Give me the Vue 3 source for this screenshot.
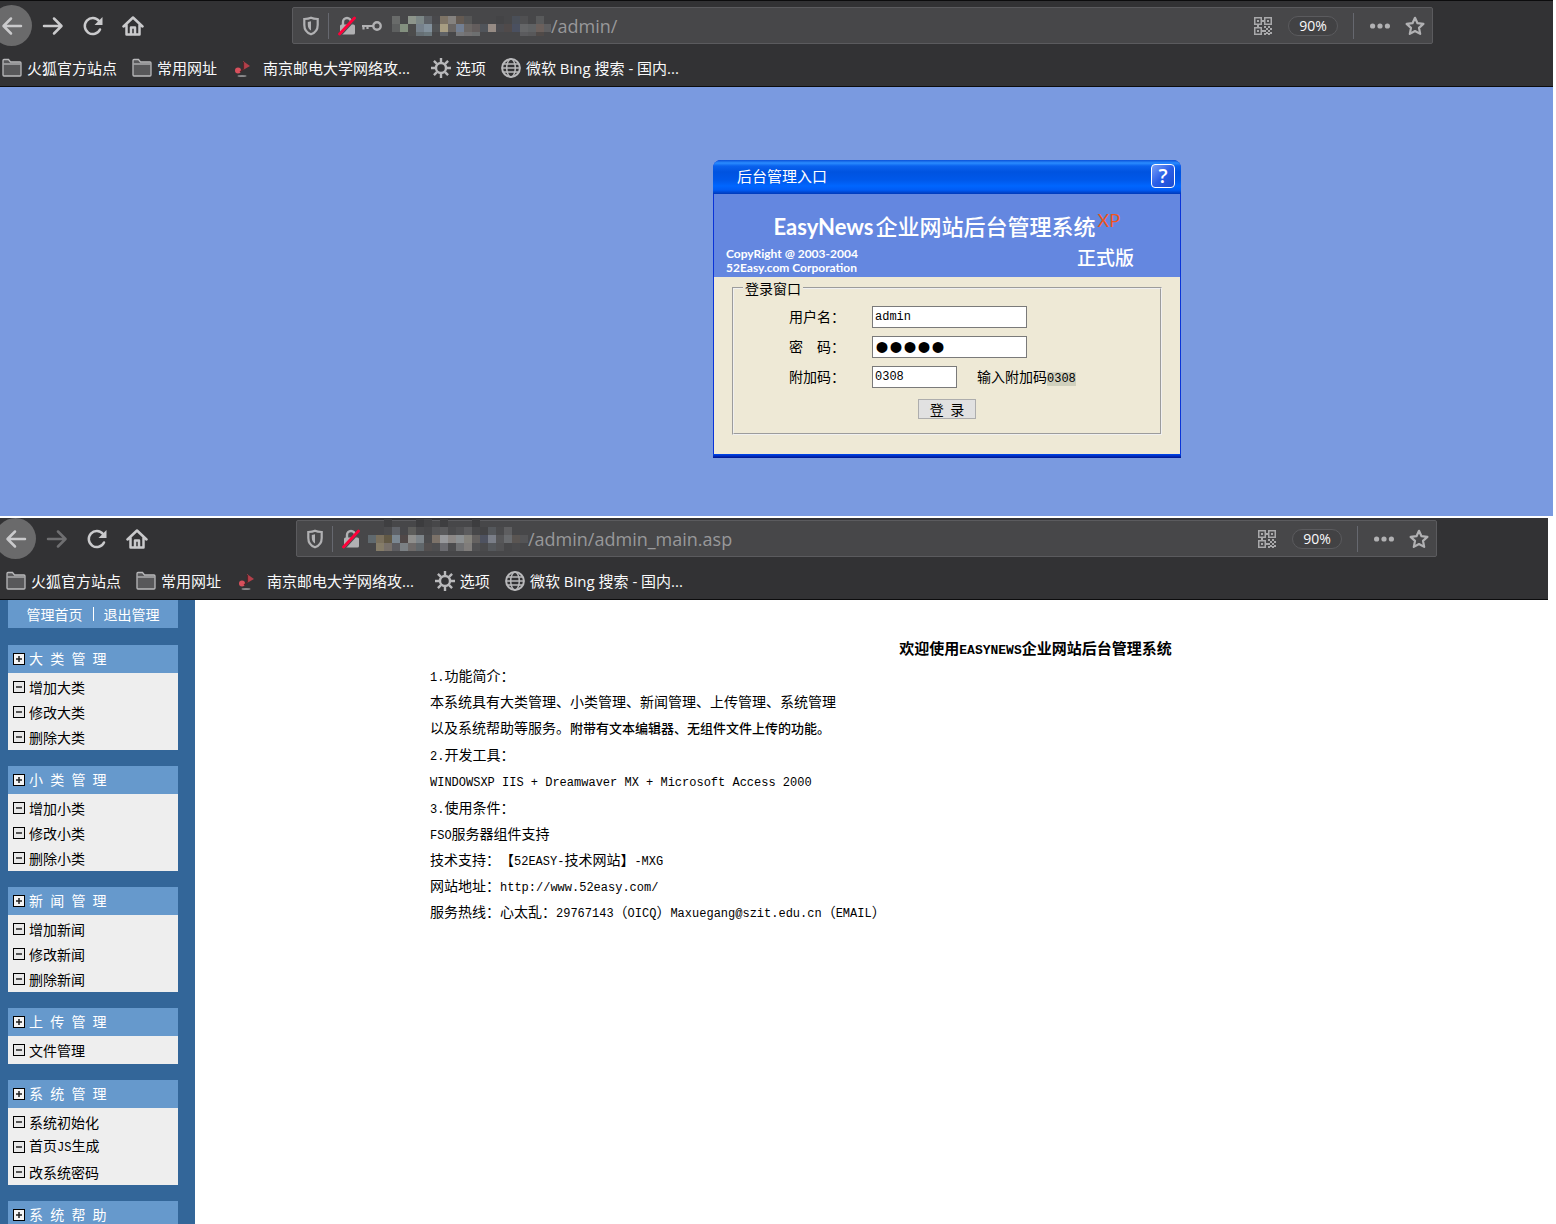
<script setup>
import { ref } from 'vue'

const browsers = [
  {
    id: 'login',
    path: '/admin/',
    canGoForward: true,
    savedLogin: true,
    mask: {
      width: 159,
      height: 20,
      rows: [
        '696b6a - 8d958b 7c8787 5d6166 49494c 7e7466 85827f 645a52 565656 - - - 444446 474749 4a4f58 505052 - 595a5b -',
        '5e6060 83907f 4c4c4c 76818b 82909b 505254 a79d82 6a6664 737f92 6b6765 635d5d 50545a 968b84 4c4c50 504a4a 4a5060 656668 606264 6b605c 5e5e60',
        '- - 4c4c4c 666f74 6b777c - 5e6166 - 76777a 737172 6d6f70 - - - - - 5b5b5e 58585a 504a48 -',
      ],
    },
  },
  {
    id: 'admin',
    path: '/admin/admin_main.asp',
    canGoForward: false,
    savedLogin: false,
    mask: {
      width: 160,
      height: 32,
      rows: [
        '- - 3f3f41 - - - 3c3c3e 434345 - 3e3e40 - - - 3d3d3f - - - - - -',
        '- - 4b4b4d 5f6268 47474a 5d5d5b 4a4a4c - 555557 5a5a5c 4a4a4c 505052 5c5c5e - 434345 55585c 4a4a4c 5e5e60 - -',
        '60696e 7a705d 625945 7b8791 504848 8f8f8d 7d8489 4b4b4d 7c7269 98999c 8c8886 8c9092 85837d 646160 4e5260 7a7e88 565658 696b6e 5a5552 545456',
        '- 857c68 77706a 5c5c60 7b8084 6e6a69 60666a 534f4f 4e4e50 6b6b70 4c4c4e 6f7072 807d7b 505052 4a4a4c 55585c 525254 - 4a4a4c -',
      ],
    },
  },
]

const bookmarks = [
  { icon: 'folder', label: '火狐官方站点' },
  { icon: 'folder', label: '常用网址' },
  { icon: 'flag', label: '南京邮电大学网络攻...' },
  { icon: 'gear', label: '选项' },
  { icon: 'globe', label: '微软 Bing 搜索 - 国内...' },
]

const groups = [
  { title: '大 类 管 理', items: ['增加大类', '修改大类', '删除大类'] },
  { title: '小 类 管 理', items: ['增加小类', '修改小类', '删除小类'] },
  { title: '新 闻 管 理', items: ['增加新闻', '修改新闻', '删除新闻'] },
  { title: '上 传 管 理', items: ['文件管理'] },
  { title: '系 统 管 理', items: ['系统初始化', '首页JS生成', '改系统密码'] },
  { title: '系 统 帮 助', items: [] },
]

const sections = [
  [
    { text: '1.功能简介：' },
    { text: '本系统具有大类管理、小类管理、新闻管理、上传管理、系统管理' },
    { text: '以及系统帮助等服务。', extra: '附带有文本编辑器、无组件文件上传的功能。' },
  ],
  [
    { text: '2.开发工具：' },
    { text: 'WINDOWSXP IIS + Dreamwaver MX + Microsoft Access 2000' },
  ],
  [
    { text: '3.使用条件：' },
    { text: 'FSO服务器组件支持' },
    { text: '技术支持：【52EASY-技术网站】-MXG' },
    { text: '网站地址：http://www.52easy.com/' },
    { text: '服务热线：心太乱：29767143（OICQ）Maxuegang@szit.edu.cn（EMAIL）' },
  ],
]

const username = ref('admin')
const password = ref('admin')
const code = ref('0308')

// Splits text into half-width and full-width runs, which are set in different faces.
function runs(text) {
  return text.match(/[\x20-\x7e]+|[^\x20-\x7e]+/g).map((t) => ({ t, latin: /^[\x20-\x7e]/.test(t) }))
}

function cells(rows) {
  return rows.flatMap((row, y) =>
    row.split(' ').map((c, x) => ({ x: x * 8, y: y * 8, c })).filter((cell) => cell.c !== '-')
  ).map((cell) => ({ ...cell, c: '#' + cell.c }))
}
</script>

<template>
  <div class="screen">
    <section v-for="b in browsers" :key="b.id" :class="['window', b.id]">
      <header class="chrome">
        <div class="nav">
          <button class="tool back" aria-label="后退">
            <svg width="22" height="22" viewBox="0 0 22 22" class="line"><path d="M20 11H3M10 3.5 2.5 11l7.500 7.500" /></svg>
          </button>
          <button class="tool" :disabled="!b.canGoForward" aria-label="前进">
            <svg width="22" height="22" viewBox="0 0 22 22" class="line"><path d="M2 11h17M12 3.500 19.500 11 12 18.500" /></svg>
          </button>
          <button class="tool" aria-label="刷新">
            <svg width="22" height="22" viewBox="0 0 22 22" class="line"><path d="M18 14.500A8 8 0 1 1 17 6" /><path d="M20.500 2v8h-8z" class="solid" /></svg>
          </button>
          <button class="tool" aria-label="主页">
            <svg width="22" height="22" viewBox="0 0 22 22" class="line"><path d="M1.500 11.500 11 2.500l9.500 9M4.500 10v9.500h13V10" /><path d="M9 19v-6.500h4V19" /></svg>
          </button>
          <div class="address">
            <svg class="shield" width="18" height="20" viewBox="0 0 18 20"><path d="M9 1.800c2 1 4.500 1.200 6.700 1.200v6c0 4.500-2.200 7.700-6.700 9.300C4.500 16.700 2.300 13.500 2.300 9V3C4.500 3 7 2.800 9 1.800z" fill="none" stroke="#b1b1b3" stroke-width="2.200" /><path d="M9 5.300v9.200c-2-1.100-3.200-2.900-3.200-5.500V6z" fill="#b1b1b3" /></svg>
            <span class="rule"></span>
            <svg class="lock" width="18" height="20" viewBox="0 0 18 20"><path d="M5 9V6a4 4 0 0 1 8 0v3" fill="none" stroke="#b1b1b3" stroke-width="2.400" /><rect x="2" y="8.500" width="15" height="10" rx="1.500" fill="#b1b1b3" /><path d="M2.500 19.500 18 3" stroke="#4a4a4d" stroke-width="1.500" /><path d="M1.500 18 16.500 2" stroke="#ff0039" stroke-width="2.800" stroke-linecap="round" /></svg>
            <svg v-if="b.savedLogin" class="key" width="20" height="12" viewBox="0 0 20 12"><circle cx="15" cy="6" r="3.700" fill="none" stroke="#b1b1b3" stroke-width="2.400" /><path d="M11 6H0M1.500 6v3.500M5.500 6v3" fill="none" stroke="#b1b1b3" stroke-width="2.200" /></svg>
            <svg class="mask" :width="b.mask.width" :height="b.mask.height" shape-rendering="crispEdges" aria-hidden="true">
              <rect v-for="c in cells(b.mask.rows)" :key="c.x + '-' + c.y" :x="c.x" :y="c.y" width="8" height="8" :fill="c.c" />
            </svg>
            <input class="url" type="text" :value="b.path" aria-label="地址" />
            <svg width="18" height="18" viewBox="0 0 18 18" fill="#a9a9ab">
              <path fill-rule="evenodd" d="M0 0h8v8H0zM1.500 1.500v5h5v-5zM10 0h8v8h-8zM11.500 1.500v5h5v-5zM0 10h8v8H0zM1.500 11.500v5h5v-5z" />
              <path d="M3 3h2v2H3zM13 3h2v2h-2zM3 13h2v2H3zM8 3h2v2H8zM3 8h2v2H3zM8 13h2v2H8zM10 9h2v2h-2zM14 9h2v2h-2zM12 11h2v2h-2zM16 11h2v2h-2zM10 13h2v2h-2zM14 13h2v2h-2zM12 15h2v2h-2zM16 15h2v2h-2zM10 16h2v2h-2zM14 16h2v2h-2z" />
            </svg>
            <button class="zoom">90%</button>
            <span class="rule"></span>
            <svg class="dots" width="20" height="6" viewBox="0 0 20 6" fill="#b1b1b3"><circle cx="2.600" cy="3" r="2.600" /><circle cx="10" cy="3" r="2.600" /><circle cx="17.400" cy="3" r="2.600" /></svg>
            <svg width="20" height="20" viewBox="0 0 20 20"><path d="m10 1.800 2.500 5.400 5.900.7-4.400 4 1.200 6L10 15l-5.200 2.900 1.200-6-4.400-4 5.900-.7z" fill="none" stroke="#b1b1b3" stroke-width="2.200" stroke-linejoin="round" /></svg>
          </div>
        </div>
        <nav class="bookmarks">
          <a v-for="m in bookmarks" :key="m.label" href="#" :class="m.icon">
            <svg v-if="m.icon === 'folder'" width="20" height="20" viewBox="0 0 20 20"><path d="M1 17V2.500Q1 1.500 2 1.500h4.500L8.500 4H18q1 0 1 1v12q0 1-1 1H2q-1 0-1-1z" fill="#58585a" stroke="#b9b9bb" stroke-width="1.300" /><path d="M1.500 6h17" stroke="#b9b9bb" stroke-width="1.300" /></svg>
            <svg v-else-if="m.icon === 'flag'" width="26" height="20" viewBox="0 0 26 20"><path d="M11 3 18 8l-7 4z" fill="#b3404a" /><circle cx="6" cy="12.500" r="3" fill="#d8505c" /><path d="M8 14 11.500 11V4" stroke="#5a2328" stroke-width="1.200" fill="none" /><ellipse cx="10" cy="18" rx="4.500" ry="1" fill="#8a8a8c" /></svg>
            <svg v-else-if="m.icon === 'gear'" width="20" height="20" viewBox="0 0 20 20" fill="none" stroke="#b9b9bb"><circle cx="10" cy="10" r="5" stroke-width="2.400" /><path d="M10 0v4M10 16v4M0 10h4M16 10h4M2.900 2.900l3 3M14.100 14.100l3 3M2.900 17.100l3-3M14.100 5.900l3-3" stroke-width="2.400" /></svg>
            <svg v-else width="20" height="20" viewBox="0 0 20 20" fill="none" stroke="#b9b9bb"><circle cx="10" cy="10" r="8.900" stroke-width="2" /><ellipse cx="10" cy="10" rx="4.300" ry="8.900" stroke-width="1.500" /><path d="M2.500 6h15M1 10h18M2.500 14h15" stroke-width="1.300" /></svg>
            <span>{{ m.label }}</span>
          </a>
        </nav>
      </header>

      <main v-if="b.id === 'login'" class="desktop">
        <form class="dialog" @submit.prevent>
          <div class="titlebar">
            <span>后台管理入口</span>
            <button type="button" class="help" aria-label="帮助">?</button>
          </div>
          <div class="banner">
            <h1>EasyNews<span>企业网站后台管理系统</span><sup>XP</sup></h1>
            <div class="credits">
              <p>CopyRight @ 2003-2004<br />52Easy.com Corporation</p>
              <strong>正式版</strong>
            </div>
          </div>
          <div class="panel">
            <fieldset>
              <legend>登录窗口</legend>
              <div class="fields">
                <label for="user">用户名：</label>
                <input id="user" v-model="username" type="text" />
                <label for="pass">密　码：</label>
                <input id="pass" v-model="password" type="password" />
                <label for="code">附加码：</label>
                <div class="code">
                  <input id="code" v-model="code" type="text" />
                  <span>输入附加码<mark class="latin">0308</mark></span>
                </div>
              </div>
              <button class="submit" type="submit">登&nbsp; 录</button>
            </fieldset>
          </div>
        </form>
      </main>

      <div v-else class="console">
        <aside>
          <div class="top"><a href="#">管理首页</a><i></i><a href="#">退出管理</a></div>
          <section v-for="g in groups" :key="g.title" class="group">
            <h2>
              <svg width="12" height="12" viewBox="0 0 12 12"><rect x=".5" y=".5" width="11" height="11" fill="#f4f4f4" stroke="#000" /><path d="M3 6h6M6 3v6" stroke="#222" stroke-width="1.500" /></svg>
              <span><span v-for="(r, i) in runs(g.title)" :key="i" :class="{ latin: r.latin }">{{ r.t }}</span></span>
            </h2>
            <ul>
              <li v-for="item in g.items" :key="item">
                <svg width="12" height="12" viewBox="0 0 12 12"><rect x=".5" y=".5" width="11" height="11" fill="#e8e8e8" stroke="#000" /><path d="M3 6h6" stroke="#222" stroke-width="1.500" /></svg>
                <a href="#"><span v-for="(r, i) in runs(item)" :key="i" :class="{ latin: r.latin }">{{ r.t }}</span></a>
              </li>
            </ul>
          </section>
        </aside>
        <main class="content">
          <article>
            <h1>欢迎使用<span class="latin">EASYNEWS</span>企业网站后台管理系统</h1>
            <section v-for="(s, n) in sections" :key="n">
              <p v-for="line in s" :key="line.text"><span v-for="(r, i) in runs(line.text)" :key="i" :class="{ latin: r.latin }">{{ r.t }}</span><span v-if="line.extra" class="extra">{{ line.extra }}</span></p>
            </section>
          </article>
        </main>
      </div>
    </section>
  </div>
</template>

<style>
body {
  margin: 0;
  background: #fff;
}
</style>

<style scoped>
* {
  box-sizing: border-box;
}

.screen {
  display: flex;
  flex-direction: column;
  height: 100vh;
  overflow: hidden;
  font-family: "Noto Sans CJK SC", sans-serif;
  font-size: 14px;
  color: #000;
  text-spacing-trim: space-all;
}

h1, h2, p, ul {
  margin: 0;
  padding: 0;
  font-size: inherit;
  font-weight: inherit;
}

svg {
  display: block;
  flex: none;
}

a {
  color: inherit;
  text-decoration: none;
}

button, input {
  font: inherit;
  color: inherit;
  padding: 0;
  margin: 0;
}

.latin {
  font-family: "Liberation Mono", monospace;
  font-size: 12px;
  white-space: pre;
}

.login {
  margin-right: 3px;
}

.admin {
  display: flex;
  flex-direction: column;
  flex: 1;
  min-height: 0;
  margin-top: 2px;
}

/* Browser chrome */
.chrome {
  background: #323234;
  border-bottom: 1px solid #0c0c0d;
  color: #f9f9fa;
}

.login .chrome {
  border-top: 1px solid #0c0c0d;
  padding: 4px 120px 5px 0;
}

.admin .chrome {
  margin-right: 8px;
  padding: 0 111px 5px 4px;
}

.nav {
  display: flex;
  align-items: center;
  height: 41px;
}

.tool {
  display: flex;
  align-items: center;
  justify-content: center;
  width: 40px;
  height: 40px;
  border: 0;
  background: none;
}

.tool:disabled {
  opacity: 0.4;
}

.back {
  width: 41px;
  height: 41px;
  margin: 0 1px 0 -9px;
  border-radius: 50%;
  background: #6a6a6b;
}

.line {
  fill: none;
  stroke: #cacacc;
  stroke-width: 2.5px;
  stroke-linecap: round;
  stroke-linejoin: round;
}

.line .solid {
  fill: #cacacc;
  stroke: none;
}

.address {
  display: flex;
  align-items: center;
  flex: 1;
  height: 37px;
  margin-left: 139px;
  padding: 0 7px 0 9px;
  border: 1px solid #5b5b5e;
  border-radius: 2px;
  background: #474749;
}

.rule {
  width: 1px;
  height: 26px;
  background: #66686f;
}

.shield {
  margin-right: 8px;
}

.lock {
  margin: 0 6px 0 9px;
}

.key {
  margin-right: 10px;
}

.admin .lock {
  margin-right: 8px;
}

.admin .mask {
  margin-bottom: 8px;
}

.url {
  flex: 1;
  min-width: 0;
  height: 28px;
  border: 0;
  outline: 0;
  background: none;
  color: #98989a;
  font-family: "Open Sans", sans-serif;
  font-size: 18px;
}

.zoom {
  width: 50px;
  height: 20px;
  margin: 0 15px 0 16px;
  border: 1px solid #5b5b5e;
  border-radius: 10px;
  background: #424244;
  color: #f9f9fa;
  font-family: "Open Sans", sans-serif;
  font-size: 14px;
  line-height: 18px;
}

.dots {
  margin: 0 15px 0 16px;
}

.bookmarks {
  display: flex;
  align-items: center;
  gap: 15px;
  height: 35px;
  padding: 9px 0 0 2px;
  font-family: "Open Sans", "Noto Sans CJK SC", sans-serif;
  font-size: 15px;
  line-height: 20px;
  white-space: nowrap;
}

.bookmarks a {
  display: flex;
  align-items: center;
  gap: 5px;
}

.bookmarks .flag {
  padding-right: 6px;
}

/* Sign-in page */
.desktop {
  display: flex;
  justify-content: flex-end;
  padding: 73px 372px 58px 0;
  background: #7a9ae0;
}

.dialog {
  width: 468px;
  padding-bottom: 4px;
  border-radius: 8px 8px 0 0;
  background: linear-gradient(#0a34d8 calc(100% - 4px), #0048f0 calc(100% - 4px), #00138c);
}

.titlebar {
  display: flex;
  align-items: center;
  justify-content: space-between;
  height: 34px;
  padding: 0 6px 2px 24px;
  border-radius: 8px 8px 0 0;
  background: linear-gradient(#0a50d8 0, #2a8cff 3px, #0a62ee 6px, #0053e0 12px, #0058ea 20px, #0066ff 26px, #005cf5 30px, #0038b8 34px);
  color: #fff;
  font-size: 15px;
  line-height: 20px;
}

.help {
  width: 24px;
  height: 24px;
  border: 1px solid #fff;
  border-radius: 4px;
  background: linear-gradient(135deg, #7aa0f8, #2a5ee8 50%, #1c4cd0);
  color: #fff;
  font-family: "Open Sans", sans-serif;
  font-size: 20px;
  font-weight: 600;
  line-height: 20px;
}

.banner {
  height: 83px;
  margin: 0 1px;
  padding: 13px 46px 0 12px;
  background: #6487e0;
  color: #fff;
}

.banner h1 {
  display: flex;
  align-items: center;
  justify-content: flex-end;
  gap: 2px;
  height: 40px;
  margin-right: 14px;
  font-family: Lato, "Noto Sans CJK SC", sans-serif;
  font-size: 22px;
  font-weight: 700;
  line-height: 40px;
}

.banner h1 span {
  font-weight: 500;
}

.banner sup {
  align-self: flex-start;
  color: #f0561e;
  font-size: 18px;
  font-weight: 400;
  line-height: 26px;
}

.credits {
  display: flex;
  justify-content: space-between;
  font-family: Lato, "Noto Sans CJK SC", sans-serif;
  font-size: 12px;
  font-weight: 700;
  line-height: 14px;
}

.credits strong {
  font-size: 19px;
  font-weight: 500;
  line-height: 22px;
}

.panel {
  margin: 0 1px;
  padding: 3px 18px 19px;
  background: #eee9d6;
}

fieldset {
  margin: 0;
  padding: 10px 0 14px;
  border: 2px groove #f0f0f0;
}

legend {
  height: 16px;
  margin-left: 9px;
  padding: 0 2px;
  line-height: 16px;
}

.fields {
  display: grid;
  grid-template-columns: 83px 1fr;
  grid-auto-rows: 22px;
  gap: 8px 0;
  padding-left: 55px;
  line-height: 20px;
}

.fields input {
  display: block;
  width: 155px;
  height: 22px;
  padding: 0 2px;
  border: 1px solid #7a7a7a;
  outline: 0;
  background: #fff;
  font-family: "Liberation Mono", monospace;
  font-size: 12px;
  line-height: 20px;
}

.fields input[type="password"] {
  font-family: "Liberation Sans", sans-serif;
  font-size: 40px;
}

.code {
  display: flex;
  gap: 20px;
}

.fields .code input {
  width: 85px;
}

mark {
  background: #d0d0bd;
  color: inherit;
}

.submit {
  display: block;
  width: 58px;
  height: 20px;
  margin: 11px auto 0 184px;
  border: 1px solid #adadad;
  background: #e1e1e1;
  line-height: 16px;
}

/* Admin console */
.console {
  display: flex;
  flex: 1;
  min-height: 0;
}

aside {
  flex: none;
  width: 195px;
  padding: 0 17px 0 8px;
  background: #336699;
}

.top {
  display: flex;
  align-items: center;
  justify-content: center;
  height: 28px;
  margin-bottom: 17px;
  background: #6699cc;
  color: #fff;
}

.top i {
  width: 1px;
  height: 14px;
  margin: 0 10px;
  background: #fff;
}

.group {
  margin-bottom: 16px;
}

.group h2, .group li {
  display: flex;
  align-items: center;
  gap: 4px;
  padding-left: 5px;
  line-height: 20px;
}

.group h2 {
  height: 28px;
  background: #6699cc;
  color: #fff;
}

.group ul {
  display: flex;
  flex-direction: column;
  justify-content: center;
  min-height: 28px;
  padding: 1px 0;
  background: #eee;
  list-style: none;
}

.group li {
  height: 25px;
}

.content {
  flex: 1;
  min-width: 0;
  padding: 35px 0 0 235px;
}

article {
  width: calc(100% + 85px);
  line-height: 26px;
}

article h1 {
  height: 27px;
  font-size: 15px;
  font-weight: 700;
  text-align: center;
}

article h1 .latin {
  font-size: 13px;
}

article p {
  height: 26px;
  white-space: nowrap;
}

article section + section {
  margin-top: 1px;
}

.extra {
  font-size: 13px;
  font-weight: 500;
}
</style>
